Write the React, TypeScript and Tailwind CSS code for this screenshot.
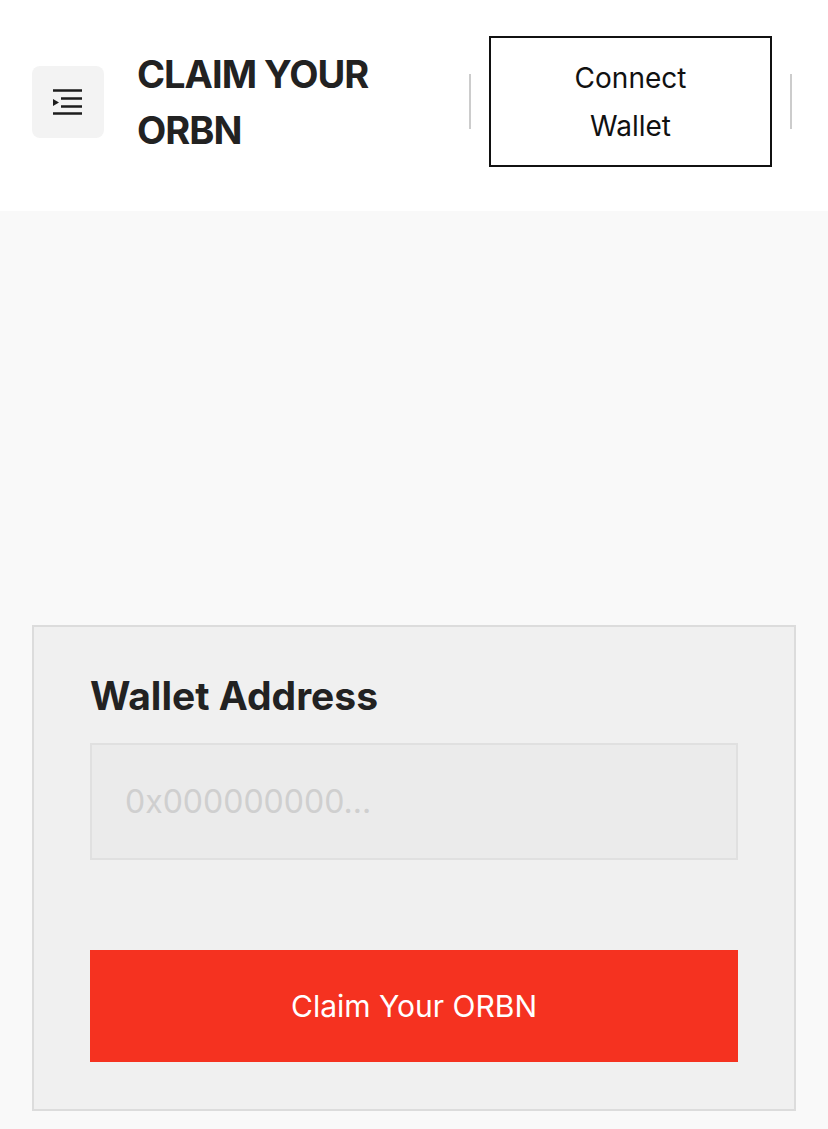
import React from "react";

const IndentIcon = () => (
	<svg width="30" height="26" viewBox="0 0 30 26" fill="none" className="shrink-0">
		<path d="M0 1.5H29M8 9.5H29M8 17.5H29M0 24.5H29" stroke="#1c1c1c" strokeWidth="2.5" />
		<path d="M0 10L6 13.5L0 17Z" fill="#1c1c1c" />
	</svg>
);

const App = () => {
	return (
		<div className="min-h-screen bg-[#f9f9f9] font-['Inter',sans-serif]">
			{/* Header */}
			<header className="bg-white h-[211px] pl-8 pr-[36px] pt-9 pb-11 flex items-center">
				<button className="w-[72px] h-[72px] rounded-lg bg-[#f3f3f3] flex items-center justify-center shrink-0">
					<IndentIcon />
				</button>
				<h1 className="ml-[33px] flex-1 text-[38px] leading-[56px] font-bold text-[#222] tracking-[-1px]">
					CLAIM YOUR ORBN
				</h1>
				<div className="w-[2px] h-[55px] bg-[#cccccc]" />
				<button className="ml-[18px] w-[283px] h-[131px] border-2 border-[#111] text-[28px] leading-[48px] text-[#111] flex items-center justify-center text-center">
					Connect
					<br />
					Wallet
				</button>
				<div className="ml-[18px] w-[2px] h-[55px] bg-[#cccccc]" />
			</header>

			{/* Claim form */}
			<main className="px-8 pt-[414px] pb-[18px]">
				<div className="border-2 border-[#dcdcdc] bg-[#f0f0f0] px-[56px] pt-[46px] pb-[47px]">
					<label className="block text-[39px] leading-[46px] font-bold text-[#222] mb-6">
						Wallet Address
					</label>
					<input
						type="text"
						placeholder="0x000000000..."
						className="w-full h-[117px] border-2 border-[#e0e0e0] bg-[#ebebeb] px-[33px] text-[32px] text-[#222] placeholder:text-[#cfcfcf] outline-none"
					/>
					<button className="mt-[90px] w-full h-[112px] bg-[#f53220] text-white text-[30px]">
						Claim Your ORBN
					</button>
				</div>
			</main>
		</div>
	);
};

export default App;
